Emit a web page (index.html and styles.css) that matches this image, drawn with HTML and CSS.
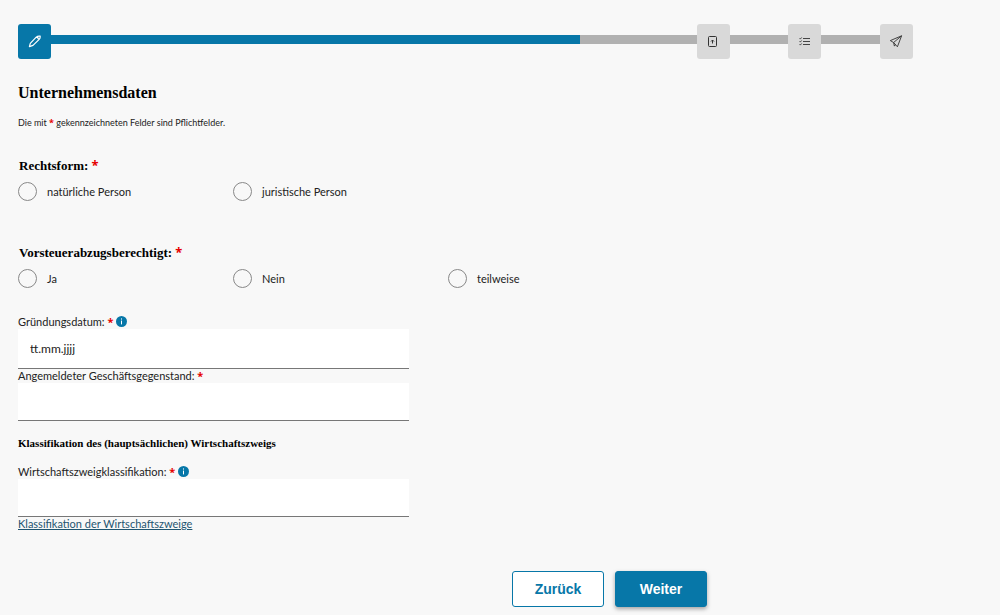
FILE: index.html
```
<!DOCTYPE html>
<html lang="de">
<head>
    <meta charset="UTF-8">
    <meta name="viewport" content="width=device-width, initial-scale=1.0">
    <title>Unternehmensdaten</title>
    <link rel="stylesheet" href="styles.css">
</head>
<body>
    <main class="page">
        <div class="stepper">
            <div class="step active">
                <svg width="14" height="14" viewBox="0 0 14 14" fill="none" stroke="currentColor" stroke-width="1.2" stroke-linejoin="round">
                    <path d="M1.4 11.6 L2.3 8.4 L8.2 2.2 Q9.8 .8 12.2 1.2 Q12.4 3 11.2 4.4 L5 10.4 Z M8.2 2.2 Q10.4 2.4 10.3 4.2"/>
                </svg>
            </div>
            <div class="line line-long"><div class="line-done"></div></div>
            <div class="step">
                <svg width="14" height="14" viewBox="0 0 14 14" fill="none" stroke="currentColor">
                    <rect x="2.5" y="1.5" width="8" height="10" rx="1"/>
                    <path d="M6.5 8.5 V5 M5 6.5 L6.5 5 L8 6.5"/>
                </svg>
            </div>
            <div class="line"></div>
            <div class="step">
                <svg width="14" height="14" viewBox="0 0 14 14" fill="none" stroke="currentColor" stroke-width=".9">
                    <path d="M5 3.5 H12 M5 6.5 H12 M5 9.5 H12 M1.6 3.4 L2.3 4.1 L3.6 2.5 M1.6 6.4 L2.3 7.1 L3.6 5.5 M1.6 9.4 L2.3 10.1 L3.6 8.5"/>
                </svg>
            </div>
            <div class="line"></div>
            <div class="step">
                <svg width="14" height="14" viewBox="0 0 14 14" fill="none" stroke="currentColor" stroke-width=".9" stroke-linejoin="round">
                    <path d="M12.6 .8 L1.3 5.6 L4.6 7.5 L8.4 11.8 Z M12.6 .8 L4.6 7.5 L5.4 11.1 L6.5 9.5"/>
                </svg>
            </div>
        </div>

        <h1>Unternehmensdaten</h1>
        <p class="note">Die mit <span class="required">*</span> gekennzeichneten Felder sind Pflichtfelder.</p>

        <form class="company-form">
            <fieldset>
                <legend>Rechtsform: <span class="required">*</span></legend>
                <div class="options">
                    <label><input type="radio" name="rechtsform" value="natuerlich">natürliche Person</label>
                    <label><input type="radio" name="rechtsform" value="juristisch">juristische Person</label>
                </div>
            </fieldset>
            <fieldset>
                <legend>Vorsteuerabzugsberechtigt: <span class="required">*</span></legend>
                <div class="options">
                    <label><input type="radio" name="vorsteuer" value="ja">Ja</label>
                    <label><input type="radio" name="vorsteuer" value="nein">Nein</label>
                    <label><input type="radio" name="vorsteuer" value="teilweise">teilweise</label>
                </div>
            </fieldset>

            <div class="field">
                <label for="gruendung">Gründungsdatum: <span class="required">*</span>
                    <svg class="info" width="11" height="11" viewBox="0 0 11 11"><circle cx="5.5" cy="5.5" r="5.5" fill="#0777a8"/><path d="M5.5 2.4 V3.6 M5.5 4.6 V8.4" stroke="#fff"/></svg>
                </label>
                <input type="text" id="gruendung" class="date" placeholder="tt.mm.jjjj">
            </div>
            <div class="field">
                <label for="gegenstand">Angemeldeter Geschäftsgegenstand: <span class="required">*</span></label>
                <input type="text" id="gegenstand">
            </div>

            <h2>Klassifikation des (hauptsächlichen) Wirtschaftszweigs</h2>
            <div class="field">
                <label for="zweig">Wirtschaftszweigklassifikation: <span class="required">*</span>
                    <svg class="info" width="11" height="11" viewBox="0 0 11 11"><circle cx="5.5" cy="5.5" r="5.5" fill="#0777a8"/><path d="M5.5 2.4 V3.6 M5.5 4.6 V8.4" stroke="#fff"/></svg>
                </label>
                <input type="text" id="zweig">
                <a href="#klassifikation">Klassifikation der Wirtschaftszweige</a>
            </div>

            <div class="buttons">
                <button type="button" class="secondary">Zurück</button>
                <button type="submit" class="primary">Weiter</button>
            </div>
        </form>
    </main>
</body>
</html>
```
FILE: styles.css
```
:root {
    --primary: #0777a8;
    --page-bg: #f8f8f8;
    --text: #222;
    --step-bg: #d9d9d9;
    --line: #b1b1b1;
    --required: #e60000;
}

* {
    box-sizing: border-box;
}

body {
    margin: 0;
    background: var(--page-bg);
    color: var(--text);
    font-family: Lato, sans-serif;
    font-size: 11px;
    line-height: 14px;
}

.page {
    padding: 24px 87px 8px 18px;
}

.stepper {
    display: flex;
    align-items: center;
}

.step {
    display: flex;
    align-items: center;
    justify-content: center;
    width: 33px;
    height: 35px;
    border-radius: 3px;
    background: var(--step-bg);
    color: #333;
}

.step.active {
    background: var(--primary);
    color: #fff;
}

.line {
    flex: 1;
    height: 9px;
    margin-bottom: 4px;
    background: var(--line);
}

.line-long {
    flex: 11;
}

.line-done {
    width: 82%;
    height: 100%;
    background: var(--primary);
}

h1, h2, legend {
    margin: 0;
    color: #000;
    font-family: "Liberation Serif", serif;
    font-weight: bold;
}

h1 {
    margin-top: 22px;
    font-size: 16px;
    line-height: 24px;
}

.note {
    height: 16px;
    margin: 10px 0 26px;
    font-size: 9px;
    line-height: 16px;
}

.required {
    color: var(--required);
    font-family: "Noto Sans", sans-serif;
    font-weight: bold;
    line-height: 1;
}

.company-form {
    max-width: 689px;
}

fieldset {
    margin: 0 0 43px;
    padding: 0;
    border: 0;
}

fieldset + fieldset {
    margin-bottom: 27px;
}

legend {
    height: 18px;
    padding: 0 1px;
    font-size: 13px;
    line-height: 18px;
}

.options {
    display: flex;
    margin-top: 7px;
}

.options label {
    display: flex;
    align-items: center;
    gap: 10px;
    width: 215px;
}

.options input {
    appearance: none;
    width: 19px;
    height: 19px;
    margin: 0;
    border: 1px solid #888;
    border-radius: 50%;
}

.options input:checked {
    border: 6px solid var(--primary);
}

.field {
    display: flex;
    flex-direction: column;
    align-items: flex-start;
    max-width: 391px;
}

.field label {
    height: 14px;
}

.info {
    vertical-align: -1px;
}

.field input {
    width: 100%;
    height: 38px;
    padding: 0 12px;
    border: 0;
    border-bottom: 1px solid #777;
    background: #fff;
    color: var(--text);
    font: inherit;
}

.field .date {
    height: 40px;
    font-size: 12px;
}

.field input::placeholder {
    color: var(--text);
}

.field a {
    color: #1f5570;
}

h2 {
    margin: 13px 0;
    font-size: 11px;
    line-height: 18px;
}

.buttons {
    display: flex;
    justify-content: flex-end;
    gap: 11px;
    margin-top: 40px;
}

button {
    width: 92px;
    height: 36px;
    border: 1px solid var(--primary);
    border-radius: 3px;
    font-family: "Liberation Sans", sans-serif;
    font-size: 14px;
    font-weight: bold;
    cursor: pointer;
}

.secondary {
    background: #fff;
    color: var(--primary);
}

.primary {
    background: var(--primary);
    color: #fff;
    box-shadow: 0 2px 4px rgba(0, 0, 0, 0.35);
}
```
